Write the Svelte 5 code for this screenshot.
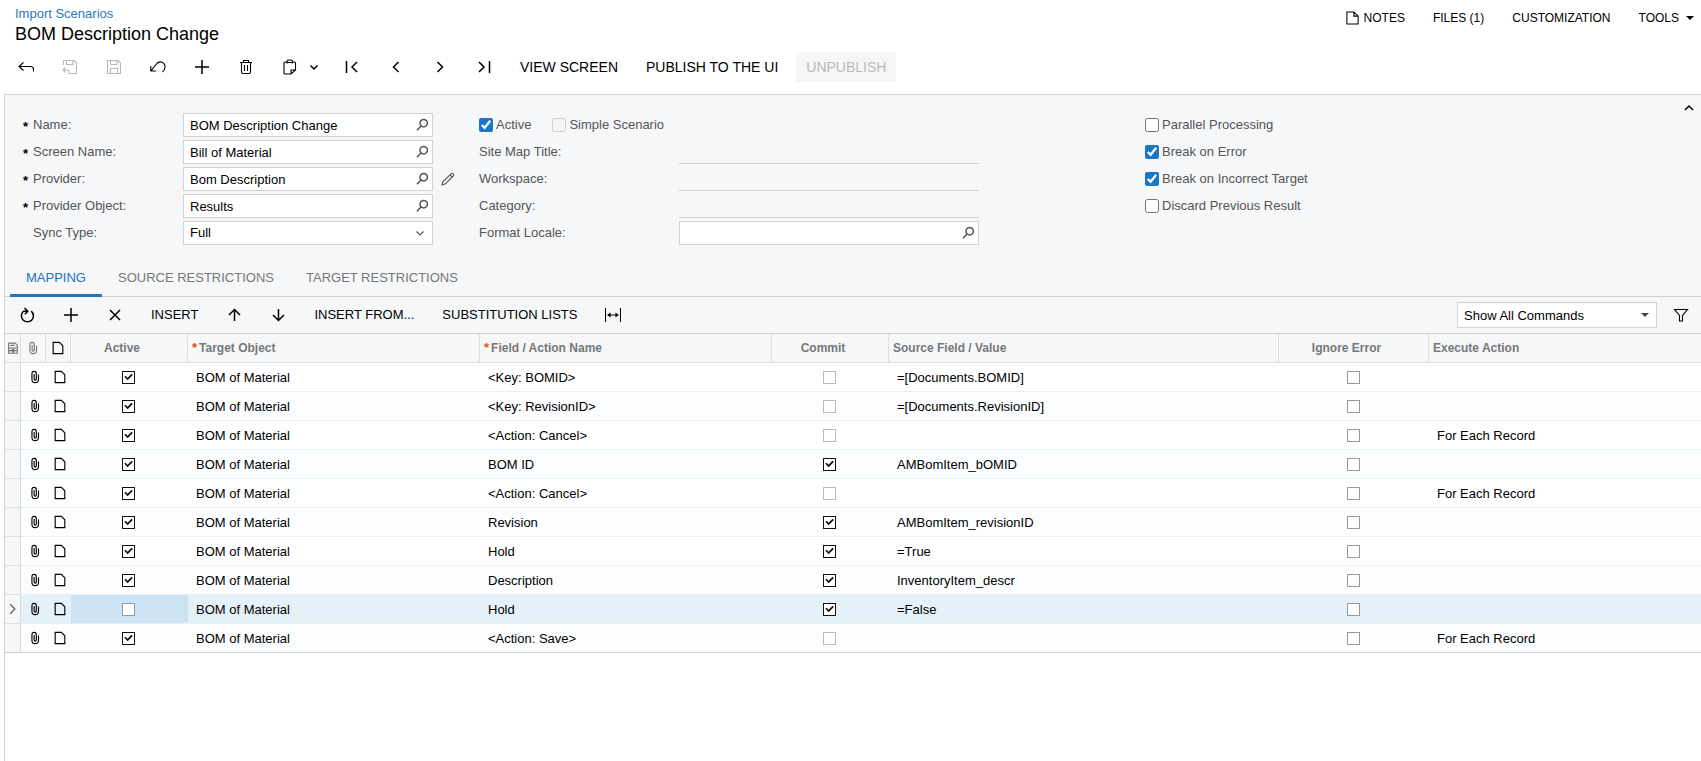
<script>
  let rows = $state([
    { active: true, object: 'BOM of Material', field: '<Key: BOMID>', commit: false, value: '=[Documents.BOMID]', ignore: false, execute: '' },
    { active: true, object: 'BOM of Material', field: '<Key: RevisionID>', commit: false, value: '=[Documents.RevisionID]', ignore: false, execute: '' },
    { active: true, object: 'BOM of Material', field: '<Action: Cancel>', commit: false, value: '', ignore: false, execute: 'For Each Record' },
    { active: true, object: 'BOM of Material', field: 'BOM ID', commit: true, value: 'AMBomItem_bOMID', ignore: false, execute: '' },
    { active: true, object: 'BOM of Material', field: '<Action: Cancel>', commit: false, value: '', ignore: false, execute: 'For Each Record' },
    { active: true, object: 'BOM of Material', field: 'Revision', commit: true, value: 'AMBomItem_revisionID', ignore: false, execute: '' },
    { active: true, object: 'BOM of Material', field: 'Hold', commit: true, value: '=True', ignore: false, execute: '' },
    { active: true, object: 'BOM of Material', field: 'Description', commit: true, value: 'InventoryItem_descr', ignore: false, execute: '' },
    { active: false, object: 'BOM of Material', field: 'Hold', commit: true, value: '=False', ignore: false, execute: '' },
    { active: true, object: 'BOM of Material', field: '<Action: Save>', commit: false, value: '', ignore: false, execute: 'For Each Record' }
  ]);
  let selected = $state(8);
  let tab = $state('MAPPING');

  const tabs = ['MAPPING', 'SOURCE RESTRICTIONS', 'TARGET RESTRICTIONS'];

  let lookups = $state([
    { id: 'name', label: 'Name:', value: 'BOM Description Change' },
    { id: 'screen', label: 'Screen Name:', value: 'Bill of Material' },
    { id: 'provider', label: 'Provider:', value: 'Bom Description', edit: true },
    { id: 'object', label: 'Provider Object:', value: 'Results' }
  ]);

  const siteFields = [
    { id: 'title', label: 'Site Map Title:' },
    { id: 'workspace', label: 'Workspace:' },
    { id: 'category', label: 'Category:' }
  ];

  let options = $state([
    { label: 'Parallel Processing', on: false },
    { label: 'Break on Error', on: true },
    { label: 'Break on Incorrect Target', on: true },
    { label: 'Discard Previous Result', on: false }
  ]);

  // 16x16 stroked paths
  const icons = {
    back: 'M5.5 3.5L1 7.5L5.5 11.5M1 7.5H12.5Q15.5 7.5 15.5 10.5V12.5',
    saveClose: 'M1.5 6V1.5H12L14.5 4V14.5H8M4.5 1.5V5.5H11V1.5M3.5 8.5L1 11L3.5 13.5M1 11H5Q7 11 7 13V15',
    save: 'M1.5 1.5H12L14.5 4V14.5H1.5ZM4.5 1.5V5.5H11V1.5M4.5 14.5V9.5H11.5V14.5',
    undo: 'M.8 7V12H6M1 11.8L5.5 6Q8.5 2 12 3.2Q15.3 4.7 15 8.2Q14.7 11 12.5 13',
    trash: 'M2 3.5H14M5.5 3.5V1.5H10.5V3.5M3.5 3.5V13Q3.5 14.5 5 14.5H11Q12.5 14.5 12.5 13V3.5M6.5 6V12M9.5 6V12',
    clip: 'M5 3H3Q2 3 2 4V14Q2 15 3 15H9L13.5 11V4Q13.5 3 12.5 3H10.5M5 4.5V2.5Q5 1 6.5 1H9Q10.5 1 10.5 2.5V4.5M5 3.5H10.5M9 15V11H13.5',
    pencil: 'M2 14L3 10.5L11 2.8Q12 1.6 13.2 2.8Q14.2 4 13.2 5L5.5 12.8ZM10 4L12 6',
    paper: 'M2.5 1.5H9.5L13.5 5.5V14.5H2.5Z',
    note: 'M2 1.5H9.5L14 6V14.5H2ZM9.5 1.5V6H14',
    attach: 'M4.5 4.5V10.5Q4.5 14.5 8 14.5Q12 14.5 12 10.5V5M4.5 4.5Q4.5 1.5 7 1.5Q9.5 1.5 9.5 4.5V10Q9.5 11.5 8.3 11.5Q7 11.5 7 10V4.5',
    fit: 'M.5 1V15M15.5 1V15M3 8H13M5 6.5L3 8L5 9.5ZM11 6.5L13 8L11 9.5Z',
    filter: 'M1.5 2.5H14.5L9.5 8.5V14H6.5V8.5Z',
    layout: 'M3 2.5H10.5L13 5V14H3ZM3 8H13M3 11H13M5 5H10M6.5 9.5H9.5M6.5 12.5H9.5',
    down2: 'M4.5 6.5L8 10L11.5 6.5'
  };
  const bold = {
    plus: 'M8 1V15M1 8H15',
    first: 'M2.5 2V14M13 3L8 8L13 13',
    prev: 'M10.5 3L5.5 8L10.5 13',
    next: 'M5.5 3L10.5 8L5.5 13',
    last: 'M13.5 2V14M3 3L8 8L3 13',
    cross: 'M3 3L13 13M13 3L3 13',
    up: 'M8.5 14V3M3 8L8.5 2.5L14 8',
    down: 'M8.5 2V13M3 8L8.5 13.5L14 8',
    refresh: 'M12.2 4.2A6 6 0 1 1 4.5 4.3H8.5M5.5 1L8.8 4.2L5.8 7.2',
    search: 'M9.7 2.5A3.7 3.7 0 1 1 9.7 9.9A3.7 3.7 0 1 1 9.7 2.5M7 9L3 13.2',
    chevron: 'M4.5 6.5L8 10L11.5 6.5',
    collapse: 'M4 10L8 6L12 10'
  };
</script>

{#snippet icon(name)}
  <svg class="icon" class:heavy={bold[name]} viewBox="0 0 16 16" aria-hidden="true">
    <path d={icons[name] ?? bold[name]} />
  </svg>
{/snippet}

{#snippet tool(name, label, disabled = false)}
  <button class="tool" aria-label={label} {disabled}>{@render icon(name)}</button>
{/snippet}

<div class="page">
  <header>
    <div class="heading">
      <a href="#scenarios">Import Scenarios</a>
      <h1>BOM Description Change</h1>
    </div>
    <nav>
      <button class="link notes">{@render icon('note')}NOTES</button>
      <button class="link">FILES (1)</button>
      <button class="link">CUSTOMIZATION</button>
      <button class="link tools">TOOLS<span class="caret"></span></button>
    </nav>
  </header>

  <div class="toolbar main-tools">
    {@render tool('back', 'Back')}
    {@render tool('saveClose', 'Save and close', true)}
    {@render tool('save', 'Save', true)}
    {@render tool('undo', 'Undo')}
    {@render tool('plus', 'Add')}
    {@render tool('trash', 'Delete')}
    <button class="tool split" aria-label="Clipboard">{@render icon('clip')}{@render icon('chevron')}</button>
    {@render tool('first', 'First')}
    {@render tool('prev', 'Previous')}
    {@render tool('next', 'Next')}
    {@render tool('last', 'Last')}
    <button class="text">VIEW SCREEN</button>
    <button class="text">PUBLISH TO THE UI</button>
    <button class="text off" disabled>UNPUBLISH</button>
  </div>

  <main>
    <section class="form">
      <div class="col">
        {#each lookups as item}
          <div class="field">
            <label class="required" for={item.id}>{item.label}</label>
            <div class="box">
              <input id={item.id} bind:value={item.value} />
              <button aria-label="Select">{@render icon('search')}</button>
            </div>
            {#if item.edit}
              <button class="edit" aria-label="Edit provider">{@render icon('pencil')}</button>
            {/if}
          </div>
        {/each}
        <div class="field">
          <label for="sync">Sync Type:</label>
          <div class="box">
            <select id="sync">
              <option>Full</option>
            </select>
            <span class="arrow">{@render icon('down2')}</span>
          </div>
        </div>
      </div>

      <div class="col middle">
        <div class="field checks">
          <label class="check"><input type="checkbox" checked />Active</label>
          <label class="check"><input type="checkbox" disabled />Simple Scenario</label>
        </div>
        {#each siteFields as item}
          <div class="field">
            <label for={item.id}>{item.label}</label>
            <input class="line" id={item.id} readonly />
          </div>
        {/each}
        <div class="field">
          <label for="locale">Format Locale:</label>
          <div class="box">
            <input id="locale" />
            <button aria-label="Select">{@render icon('search')}</button>
          </div>
        </div>
      </div>

      <div class="col">
        {#each options as item}
          <div class="field">
            <label class="check"><input type="checkbox" bind:checked={item.on} />{item.label}</label>
          </div>
        {/each}
      </div>

      <button class="collapse" aria-label="Collapse">{@render icon('collapse')}</button>
    </section>

    <div class="tabs" role="tablist">
      {#each tabs as name}
        <button role="tab" aria-selected={tab === name} class:current={tab === name} onclick={() => (tab = name)}>{name}</button>
      {/each}
    </div>

    <div class="toolbar grid-tools">
      {@render tool('refresh', 'Refresh')}
      {@render tool('plus', 'Add row')}
      {@render tool('cross', 'Delete row')}
      <button class="text">INSERT</button>
      {@render tool('up', 'Move up')}
      {@render tool('down', 'Move down')}
      <button class="text">INSERT FROM...</button>
      <button class="text">SUBSTITUTION LISTS</button>
      {@render tool('fit', 'Fit to screen')}
      <div class="commands">
        <select aria-label="Commands">
          <option>Show All Commands</option>
        </select>
        <span class="caret"></span>
      </div>
      <button class="filter" aria-label="Filter">{@render icon('filter')}</button>
    </div>

    <table>
      <colgroup>
        <col class="w-mark" />
        <col class="w-icon" />
        <col class="w-icon" />
        <col class="w-check" />
        <col class="w-name" />
        <col class="w-name" />
        <col class="w-check" />
        <col class="w-value" />
        <col class="w-ignore" />
        <col />
      </colgroup>
      <thead>
        <tr>
          <th class="glyph">{@render icon('layout')}</th>
          <th class="glyph">{@render icon('attach')}</th>
          <th class="glyph dark">{@render icon('paper')}</th>
          <th class="center">Active</th>
          <th><span class="star">*</span>Target Object</th>
          <th><span class="star">*</span>Field / Action Name</th>
          <th class="center">Commit</th>
          <th>Source Field / Value</th>
          <th class="center">Ignore Error</th>
          <th>Execute Action</th>
        </tr>
      </thead>
      <tbody>
        {#each rows as row, i}
          <tr class:selected={selected === i} onclick={() => (selected = i)}>
            <td class="mark">{#if selected === i}{@render icon('next')}{/if}</td>
            <td class="glyph">{@render icon('attach')}</td>
            <td class="glyph">{@render icon('paper')}</td>
            <td class="center focus"><input type="checkbox" aria-label="Active" bind:checked={row.active} /></td>
            <td>{row.object}</td>
            <td>{row.field}</td>
            <td class="center soft"><input type="checkbox" aria-label="Commit" bind:checked={row.commit} /></td>
            <td>{row.value}</td>
            <td class="center"><input type="checkbox" aria-label="Ignore Error" bind:checked={row.ignore} /></td>
            <td>{row.execute}</td>
          </tr>
        {/each}
      </tbody>
    </table>
  </main>
</div>

<style>
  :global(body) {
    margin: 0;
    background: #fff;
    font-family: 'Liberation Sans', Arial, sans-serif;
    font-size: 13px;
    color: #000;
  }

  .page { display: flex; flex-direction: column; min-height: 100vh; }

  button, input, select { font: inherit; color: inherit; margin: 0; }
  button { border: 0; background: none; padding: 0; cursor: pointer; }
  button:disabled { color: #b9b9b9; cursor: default; }

  .icon { display: block; flex: none; width: 16px; height: 16px; fill: none; stroke: currentColor; stroke-width: 1.1; }
  .icon.heavy { stroke-width: 1.5; }

  .caret { border: 4px solid transparent; border-top-color: currentColor; border-bottom: 0; }

  header { display: flex; justify-content: space-between; height: 52px; }
  .heading { padding: 6px 0 0 15px; }
  .heading a { display: block; line-height: 16px; color: #2a78bd; text-decoration: none; }
  h1 { margin: 1px 0 0; font-size: 18px; font-weight: normal; line-height: 22px; }

  nav { display: flex; align-items: flex-start; gap: 28px; padding: 10px 7px 0 0; }
  .link { display: flex; align-items: center; height: 16px; font-size: 12px; white-space: nowrap; }
  .notes { gap: 4px; }
  .notes .icon { width: 15px; }
  .tools { gap: 7px; }

  .toolbar { display: flex; align-items: center; }
  .main-tools { height: 30px; padding: 0 4px 12px; font-size: 14px; }
  .tool { display: flex; align-items: center; justify-content: center; width: 44px; height: 30px; }
  .split { width: 62px; gap: 8px; padding-left: 6px; }
  .text { height: 30px; padding: 0 14px; white-space: nowrap; }
  .off { margin-left: 4px; padding: 0 10px; background: #f6f6f6; }

  main { flex: 1; margin-left: 4px; border-top: 1px solid #d0d3d5; border-left: 1px solid #d0d3d5; }

  .form {
    position: relative;
    display: grid;
    grid-template-columns: 474px 666px 1fr;
    padding: 18px 0 16px;
    background: #f5f7f9;
    color: #555;
  }
  .col { display: flex; flex-direction: column; gap: 3px; }
  .field { display: flex; align-items: center; height: 24px; }
  .field > label:not(.check) { position: relative; width: 150px; padding-left: 28px; line-height: 23px; height: 24px; }
  .middle .field > label:not(.check) { width: 200px; padding-left: 0; }
  .required::before { content: '*'; position: absolute; left: 18px; top: 2px; color: #000; font-weight: bold; }

  .box { position: relative; display: flex; align-items: center; width: 250px; height: 24px; box-sizing: border-box; border: 1px solid #d0d3d5; background: #fff; }
  .middle .box, .line { width: 300px; }
  .box input, .box select { flex: 1; min-width: 0; height: 22px; padding: 0 6px; border: 0; background: none; color: #000; outline: none; appearance: none; }
  .box select { padding-bottom: 2px; }
  .box button { margin-right: 2px; }
  .arrow { position: absolute; right: 4px; pointer-events: none; }
  .line { height: 24px; box-sizing: border-box; border: 0; border-bottom: 1px solid #d0d3d5; background: none; outline: none; }
  .edit { margin-left: 7px; }

  .checks { gap: 21px; }
  .check { display: flex; align-items: flex-start; gap: 3px; height: 24px; line-height: 23px; }
  .check input { width: 14px; height: 14px; margin-top: 5px; accent-color: #1976c8; }

  .collapse { position: absolute; top: 5px; right: 4px; color: #000; }

  .tabs { display: flex; padding-left: 5px; border-bottom: 1px solid #d0d3d5; background: #f5f7f9; color: #777; }
  .tabs button { height: 36px; margin-bottom: -1px; padding: 0 16px; border-bottom: 3px solid transparent; }
  .tabs .current { border-color: #2274bb; color: #2274bb; }

  .grid-tools { height: 36px; border-bottom: 1px solid #d0d3d5; background: #f5f7f9; }
  .grid-tools .text { padding-bottom: 2px; }
  .commands { position: relative; display: flex; align-items: center; width: 200px; height: 26px; margin-left: auto; box-sizing: border-box; border: 1px solid #d0d3d5; background: #fff; }
  .commands select { width: 100%; padding: 0 6px; border: 0; background: none; appearance: none; outline: none; }
  .commands .caret { position: absolute; right: 7px; color: #444; pointer-events: none; }
  .filter { margin: 0 12px 0 16px; }

  table { width: 100%; table-layout: fixed; border-collapse: separate; border-spacing: 0; border-bottom: 1px solid #d0d3d5; }
  .w-mark { width: 16px; }
  .w-icon { width: 25px; }
  .w-check { width: 117px; }
  .w-name { width: 292px; }
  .w-value { width: 390px; }
  .w-ignore { width: 150px; }

  th { height: 28px; padding: 0 4px; border-right: 1px solid #dcdfe1; border-bottom: 1px solid #dcdfe1; background: #f5f7f9; color: #777; font-size: 12px; line-height: 16px; text-align: left; white-space: nowrap; }
  th:last-child { border-right: 0; }
  th.center { padding-right: 18px; }
  .star { margin-right: 2px; color: #e8501c; font-size: 13px; line-height: 1; }
  .dark { color: #000; }
  th.glyph { padding: 0; }
  th.glyph .icon, td.glyph .icon { width: 14px; height: 14px; margin: 0 auto; stroke-width: 1.3; }

  td { height: 28px; padding: 0 8px; border-bottom: 1px solid #e6eff5; white-space: nowrap; }
  tbody tr:nth-child(even) { background: #fbfdfe; }
  tbody tr.selected { background: #e4f1f9; }
  tbody tr:last-child td { border-bottom: 0; }
  td.glyph { padding: 0 0 0 3px; }
  td.mark { padding: 0; border-right: 1px solid #d8dbde; border-bottom-color: #dcdfe1; background: #f5f7f9; color: #666; }
  td.mark .icon { width: 15px; }
  td.center { padding-right: 10px; }
  .center { text-align: center; }
  .selected .focus { background: #cde3f3; }

  td input { position: relative; display: block; width: 13px; height: 13px; margin: 0 auto; border: 1px solid #999; background: #fff; appearance: none; }
  .soft input { border-color: #bbb; }
  td input:checked { border-color: #111; }
  td input:checked::after { content: ''; position: absolute; inset: 1px; background: #111; clip-path: polygon(4% 48%, 18% 36%, 40% 58%, 84% 14%, 98% 28%, 40% 86%); }
</style>
